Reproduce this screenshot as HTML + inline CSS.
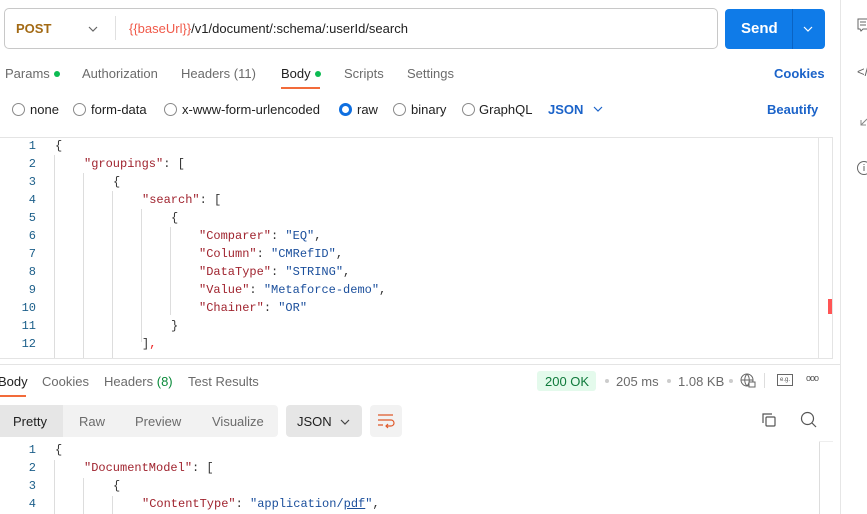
<!DOCTYPE html>
<html><head><meta charset="utf-8"><style>
*{box-sizing:border-box;margin:0;padding:0}
body{width:867px;height:514px;overflow:hidden;background:#fff;font-family:"Liberation Sans",sans-serif;font-size:13px;color:#212121;position:relative}
.a{position:absolute;white-space:nowrap}
.g{color:#6b6b6b}
.mono{font-family:"Liberation Mono",monospace;font-size:12px}
.ln{position:absolute;width:36px;text-align:right;color:#1c5f8a;font-family:"Liberation Mono",monospace;font-size:12px}
.k{color:#a0242f}.s{color:#1b4f9c}.p{color:#333}
.vl{position:absolute;width:1px;background:#ddd}
.rad{position:absolute;width:13px;height:13px;border:1px solid #8a8a8a;border-radius:50%}
.dot{display:inline-block;width:6px;height:6px;border-radius:50%;background:#0cbb52;margin-left:4px;vertical-align:1px}
</style></head><body>
<!-- URL bar -->
<div class="a" style="left:4px;top:8px;width:714px;height:41px;border:1px solid #c8c8c8;border-radius:5px"></div>
<div class="a" style="left:16px;top:21px;font-weight:bold;color:#a36a14;font-size:13px">POST</div>
<svg class="a" style="left:88px;top:25px" width="10" height="8"><path d="M1 2l4 4 4-4" stroke="#666" fill="none" stroke-width="1.2"/></svg>
<div class="a" style="left:115px;top:16px;width:1px;height:24px;background:#e0e0e0"></div>
<div class="a" style="left:129px;top:21px;font-size:13px"><span style="color:#f05a4a">{{baseUrl}}</span>/v1/document/:schema/:userId/search</div>
<div class="a" style="left:725px;top:9px;width:100px;height:40px;background:#0f7be8;border-radius:4px"></div>
<div class="a" style="left:792px;top:9px;width:1px;height:40px;background:#0a63c3"></div>
<div class="a" style="left:741px;top:20px;color:#fff;font-weight:bold;font-size:15px">Send</div>
<svg class="a" style="left:803px;top:25px" width="10" height="8"><path d="M1 2l4 4 4-4" stroke="#fff" fill="none" stroke-width="1.2"/></svg>
<!-- tabs -->
<div class="a g" style="left:5px;top:66px">Params<span class="dot"></span></div>
<div class="a g" style="left:82px;top:66px">Authorization</div>
<div class="a g" style="left:181px;top:66px">Headers (11)</div>
<div class="a" style="left:281px;top:66px">Body<span class="dot"></span></div>
<div class="a" style="left:281px;top:87px;width:39px;height:2px;background:#f26b3a"></div>
<div class="a g" style="left:344px;top:66px">Scripts</div>
<div class="a g" style="left:407px;top:66px">Settings</div>
<div class="a" style="left:774px;top:66px;color:#1b63c9;font-weight:bold">Cookies</div>
<!-- body type -->
<div class="rad" style="left:12px;top:103px"></div><div class="a" style="left:30px;top:102px">none</div>
<div class="rad" style="left:73px;top:103px"></div><div class="a" style="left:91px;top:102px">form-data</div>
<div class="rad" style="left:164px;top:103px"></div><div class="a" style="left:182px;top:102px">x-www-form-urlencoded</div>
<div class="rad" style="left:339px;top:103px;border:3.5px solid #0f6fe0"></div><div class="a" style="left:357px;top:102px">raw</div>
<div class="rad" style="left:393px;top:103px"></div><div class="a" style="left:411px;top:102px">binary</div>
<div class="rad" style="left:462px;top:103px"></div><div class="a" style="left:479px;top:102px">GraphQL</div>
<div class="a" style="left:548px;top:102px;color:#1b63c9;font-weight:bold">JSON</div>
<svg class="a" style="left:593px;top:105px" width="10" height="8"><path d="M1 2l4 4 4-4" stroke="#1b63c9" fill="none" stroke-width="1.2"/></svg>
<div class="a" style="left:767px;top:102px;color:#1b63c9;font-weight:bold">Beautify</div>
<!-- editor -->
<div class="a" style="left:0;top:137px;width:833px;height:222px;border-top:1px solid #e4e4e4;border-bottom:1px solid #e4e4e4;border-right:1px solid #e4e4e4"></div>
<div class="a" style="left:818px;top:138px;width:1px;height:220px;background:#e4e4e4"></div>
<div class="a" style="left:828px;top:299px;width:4px;height:15px;background:#f55"></div>
<div class="vl" style="left:54px;top:155px;height:203px"></div>
<div class="vl" style="left:83px;top:173px;height:185px"></div>
<div class="vl" style="left:112px;top:191px;height:167px"></div>
<div class="vl" style="left:141px;top:209px;height:133px"></div>
<div class="vl" style="left:170px;top:227px;height:88px"></div>
<div class="ln" style="left:0;top:139px">1</div><div class="a mono p" style="left:55px;top:139px">{</div>
<div class="ln" style="left:0;top:157px">2</div><div class="a mono" style="left:84px;top:157px"><span class="k">"groupings"</span><span class="p">: [</span></div>
<div class="ln" style="left:0;top:175px">3</div><div class="a mono p" style="left:113px;top:175px">{</div>
<div class="ln" style="left:0;top:193px">4</div><div class="a mono" style="left:142px;top:193px"><span class="k">"search"</span><span class="p">: [</span></div>
<div class="ln" style="left:0;top:211px">5</div><div class="a mono p" style="left:171px;top:211px">{</div>
<div class="ln" style="left:0;top:229px">6</div><div class="a mono" style="left:199px;top:229px"><span class="k">"Comparer"</span><span class="p">: </span><span class="s">"EQ"</span><span class="p">,</span></div>
<div class="ln" style="left:0;top:247px">7</div><div class="a mono" style="left:199px;top:247px"><span class="k">"Column"</span><span class="p">: </span><span class="s">"CMRefID"</span><span class="p">,</span></div>
<div class="ln" style="left:0;top:265px">8</div><div class="a mono" style="left:199px;top:265px"><span class="k">"DataType"</span><span class="p">: </span><span class="s">"STRING"</span><span class="p">,</span></div>
<div class="ln" style="left:0;top:283px">9</div><div class="a mono" style="left:199px;top:283px"><span class="k">"Value"</span><span class="p">: </span><span class="s">"Metaforce-demo"</span><span class="p">,</span></div>
<div class="ln" style="left:0;top:301px">10</div><div class="a mono" style="left:199px;top:301px"><span class="k">"Chainer"</span><span class="p">: </span><span class="s">"OR"</span></div>
<div class="ln" style="left:0;top:319px">11</div><div class="a mono p" style="left:171px;top:319px">}</div>
<div class="ln" style="left:0;top:337px">12</div><div class="a mono p" style="left:142px;top:337px">]<span style="color:#e22">,</span></div>
<!-- divider -->
<div class="a" style="left:0;top:364px;width:840px;height:1px;background:#e4e4e4"></div>
<!-- response tabs -->
<div class="a" style="left:-2px;top:374px">Body</div>
<div class="a" style="left:0;top:395px;width:26px;height:2px;background:#f26b3a"></div>
<div class="a g" style="left:42px;top:374px">Cookies</div>
<div class="a g" style="left:104px;top:374px">Headers <span style="color:#0a8a3a">(8)</span></div>
<div class="a g" style="left:188px;top:374px">Test Results</div>
<div class="a" style="left:537px;top:371px;width:59px;height:20px;background:#e4faec;border-radius:3px"></div>
<div class="a" style="left:545px;top:374px;color:#107a3c">200 OK</div>
<div class="a" style="left:605px;top:379px;width:4px;height:4px;border-radius:50%;background:#ccc"></div>
<div class="a g" style="left:616px;top:374px">205 ms</div>
<div class="a" style="left:667px;top:379px;width:4px;height:4px;border-radius:50%;background:#ccc"></div>
<div class="a g" style="left:678px;top:374px">1.08 KB</div>
<div class="a" style="left:729px;top:379px;width:4px;height:4px;border-radius:50%;background:#ccc"></div>
<svg class="a" style="left:740px;top:373px" width="17" height="16"><circle cx="7" cy="7" r="6" fill="none" stroke="#666"/><path d="M1 7h12M7 1c-3 3-3 9 0 12M7 1c3 3 3 9 0 12" fill="none" stroke="#666"/><rect x="9" y="9" width="6" height="5" fill="#fff" stroke="#666"/></svg>
<div class="a" style="left:764px;top:373px;width:1px;height:15px;background:#ddd"></div>
<div class="a" style="left:777px;top:374px;width:16px;height:12px;border:1px solid #666;font-size:6px;line-height:10px;text-align:center;color:#555">e.g.</div>
<div class="a" style="left:806px;top:373px;font-size:9px;color:#555;letter-spacing:-1px">ooo</div>
<!-- response toolbar -->
<div class="a" style="left:0;top:405px;width:278px;height:32px;background:#f2f2f2;border-radius:0 4px 4px 0"></div>
<div class="a" style="left:0;top:405px;width:63px;height:32px;background:#e6e6e6"></div>
<div class="a" style="left:13px;top:414px">Pretty</div>
<div class="a g" style="left:79px;top:414px">Raw</div>
<div class="a g" style="left:135px;top:414px">Preview</div>
<div class="a g" style="left:212px;top:414px">Visualize</div>
<div class="a" style="left:286px;top:405px;width:76px;height:32px;background:#e6e6e6;border-radius:4px"></div>
<div class="a" style="left:297px;top:414px">JSON</div>
<svg class="a" style="left:340px;top:418px" width="10" height="8"><path d="M1 2l4 4 4-4" stroke="#444" fill="none" stroke-width="1.2"/></svg>
<div class="a" style="left:370px;top:405px;width:32px;height:32px;background:#f2f2f2;border-radius:4px"></div>
<svg class="a" style="left:377px;top:413px" width="18" height="16"><path d="M1 2h15M1 7h13a3 3 0 0 1 0 6H9M11 11l-2 2 2 2M1 12h5" fill="none" stroke="#e0592a" stroke-width="1.2"/></svg>
<svg class="a" style="left:761px;top:412px" width="16" height="16"><path d="M2 11V2h9" fill="none" stroke="#555" stroke-width="1.2"/><rect x="5" y="5" width="9" height="9" rx="1" fill="none" stroke="#555" stroke-width="1.2"/></svg>
<svg class="a" style="left:800px;top:411px" width="18" height="18"><circle cx="7.5" cy="7.5" r="6" fill="none" stroke="#555" stroke-width="1.2"/><path d="M12 12l4 4" stroke="#555" stroke-width="1.2"/></svg>
<div class="a" style="left:819px;top:441px;width:1px;height:73px;background:#ddd"></div>
<div class="a" style="left:819px;top:441px;width:14px;height:1px;background:#eee"></div>
<!-- response code -->
<div class="vl" style="left:54px;top:460px;height:54px"></div>
<div class="vl" style="left:83px;top:478px;height:36px"></div>
<div class="vl" style="left:112px;top:496px;height:18px"></div>
<div class="ln" style="left:0;top:443px">1</div><div class="a mono p" style="left:55px;top:443px">{</div>
<div class="ln" style="left:0;top:461px">2</div><div class="a mono" style="left:84px;top:461px"><span class="k">"DocumentModel"</span><span class="p">: [</span></div>
<div class="ln" style="left:0;top:479px">3</div><div class="a mono p" style="left:113px;top:479px">{</div>
<div class="ln" style="left:0;top:497px">4</div><div class="a mono" style="left:142px;top:497px"><span class="k">"ContentType"</span><span class="p">: </span><span class="s">"application/<u>pdf</u>"</span><span class="p">,</span></div>
<!-- right sidebar -->
<div class="a" style="left:840px;top:0;width:1px;height:514px;background:#e6e6e6"></div>
<svg class="a" style="left:857px;top:18px" width="10" height="16"><path d="M1 1h10v10H6l-2 2-1-2H1z" fill="none" stroke="#666"/><path d="M3 4h6M3 7h6" stroke="#666"/></svg>
<div class="a" style="left:857px;top:64px;color:#666;font-size:13px">&lt;/</div>
<svg class="a" style="left:859px;top:113px" width="8" height="14"><path d="M2 12l6-6M2 7v5h5" fill="none" stroke="#888"/></svg>
<svg class="a" style="left:856px;top:160px" width="11" height="16"><circle cx="8" cy="8" r="6.5" fill="none" stroke="#666"/><path d="M8 6v5M8 4v1" stroke="#666"/></svg>
</body></html>
